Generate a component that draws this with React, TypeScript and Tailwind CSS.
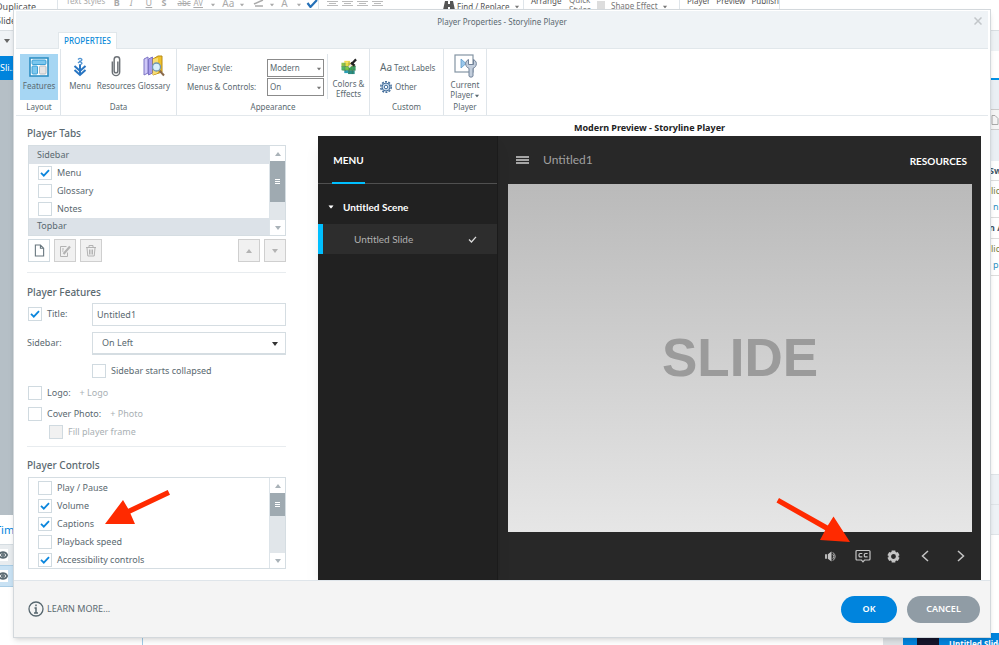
import React, { useState } from 'react';
import { Eye } from 'lucide-react';

interface Option {
  id: string;
  label: string;
  checked: boolean;
}

const initialTabs: Option[] = [
  { id: 'menu', label: 'Menu', checked: true },
  { id: 'glossary', label: 'Glossary', checked: false },
  { id: 'notes', label: 'Notes', checked: false },
];

const initialControls: Option[] = [
  { id: 'play', label: 'Play / Pause', checked: false },
  { id: 'volume', label: 'Volume', checked: true },
  { id: 'captions', label: 'Captions', checked: true },
  { id: 'speed', label: 'Playback speed', checked: false },
  { id: 'accessibility', label: 'Accessibility controls', checked: true },
];

function Caret({ className = '', up = false }: { className?: string; up?: boolean }) {
  return (
    <svg viewBox="0 0 6 4" className={`w-1.5 h-1 shrink-0 ${className}`} fill="currentColor" aria-hidden="true">
      <path d={up ? 'M0 4h6L3 0z' : 'M0 0h6L3 4z'} />
    </svg>
  );
}

interface CheckboxProps {
  id: string;
  checked: boolean;
  disabled?: boolean;
  onChange: () => void;
}

function Checkbox({ id, checked, disabled, onChange }: CheckboxProps) {
  return (
    <span className="relative block w-3.5 h-3.5 shrink-0">
      <input
        id={id}
        type="checkbox"
        checked={checked}
        disabled={disabled}
        onChange={onChange}
        className="peer block appearance-none w-3.5 h-3.5 border border-[#d0dae0] bg-white disabled:bg-[#f1f1f1]"
      />
      <svg
        viewBox="0 0 14 14"
        className="absolute inset-0 hidden peer-checked:block pointer-events-none"
        fill="none"
        stroke="#0b86dd"
        strokeWidth="1.8"
        aria-hidden="true"
      >
        <path d="M3 6.8 5.8 9.6 11 4.2" />
      </svg>
    </span>
  );
}

function OptionRow({ option, onToggle }: { option: Option; onToggle: (id: string) => void }) {
  return (
    <div className="flex items-center h-[18px] pl-[9px] gap-[5px]">
      <Checkbox id={option.id} checked={option.checked} onChange={() => onToggle(option.id)} />
      <label htmlFor={option.id}>{option.label}</label>
    </div>
  );
}

function Scrollbar({ thumb }: { thumb: string }) {
  return (
    <div className="flex flex-col w-4 shrink-0 border-l border-[#dde4e9] bg-[#e1e6ea] text-[#a9b2b8]">
      <div className="flex items-center justify-center h-[15px] bg-white">
        <Caret up />
      </div>
      <div className={`flex flex-col items-center justify-center gap-px bg-[#9faab1] ${thumb}`}>
        <i className="block w-[5px] h-px bg-white" />
        <i className="block w-[5px] h-px bg-white" />
        <i className="block w-[5px] h-px bg-white" />
      </div>
      <div className="flex items-center justify-center h-[15px] bg-white mt-auto">
        <Caret />
      </div>
    </div>
  );
}

function RibbonGroup({ label, className = '', children }: { label: string; className?: string; children: React.ReactNode }) {
  return (
    <section className={`flex flex-col shrink-0 border-r border-[#dfe5ea] pt-[5px] ${className}`}>
      <div className="flex h-[47px]">{children}</div>
      <div className="text-center leading-3">{label}</div>
    </section>
  );
}

function RibbonSelect({ id, label, value }: { id: string; label: string; value: string }) {
  return (
    <div className="flex items-center h-[19px]">
      <label htmlFor={id} className="w-20">{label}</label>
      <span className="relative">
        <select
          id={id}
          defaultValue={value}
          className="block appearance-none w-[57px] h-[18px] pl-0.5 border border-[#8b8b8b] bg-white"
        >
          <option>{value}</option>
        </select>
        <Caret className="absolute right-0.5 top-2 scale-75 text-[#777] pointer-events-none" />
      </span>
    </div>
  );
}

function Ribbon() {
  return (
    <div className="flex h-[67px] mx-0.5 border-b border-[#e3e8ec] text-[8px]">
      <RibbonGroup label="Layout" className="w-[45px] pl-1 pr-0.5">
        <button className="flex flex-col items-center w-full h-[46px] pt-[3px] bg-[#a6d6f3]">
          <svg viewBox="0 0 20 20" className="w-5 h-5" aria-hidden="true">
            <rect x="1" y="1" width="18" height="18" fill="#fff" stroke="#2d8fc4" strokeWidth="1.6" />
            <rect x="3" y="3" width="14" height="4.5" rx="1" fill="#7cc7ee" stroke="#3b9fd4" />
            <rect x="3" y="9" width="5.5" height="8" rx="1" fill="#7cc7ee" stroke="#3b9fd4" />
            <rect x="10.5" y="9" width="6.5" height="8" rx="1" fill="#e5e5e5" stroke="#b9bec2" />
          </svg>
          <span className="mt-[3px] leading-3">Features</span>
        </button>
      </RibbonGroup>

      <RibbonGroup label="Data" className="w-[116px]">
        <button className="flex flex-col items-center w-[38px] pt-[3px]">
          <svg viewBox="0 0 20 20" className="w-5 h-5" fill="none" aria-hidden="true">
            <path d="M8 2.500q2-2 3.500-.5T9 4.500M8 6q2-2 3.500-.5T9 8" stroke="#4f93d2" strokeWidth="1.300" />
            <path d="M4.500 9 10 14l5.500-5M4.500 13 10 18l5.500-5" stroke="#2875c2" strokeWidth="2" />
            <path d="M10 8v9" stroke="#2875c2" strokeWidth="2" />
          </svg>
          <span className="mt-[3px] leading-3">Menu</span>
        </button>
        <button className="flex flex-col items-center w-[34px] pt-px">
          <svg viewBox="0 0 12 24" className="w-3 h-[22px]" fill="none" stroke="#6d7277" strokeWidth="1.6" aria-hidden="true">
            <path d="M2 7v11.500a4 4 0 0 0 8 0V5a3 3 0 0 0-6 0v12.500a2 2 0 0 0 4 0V7" />
          </svg>
          <span className="mt-[3px] leading-3">Resources</span>
        </button>
        <button className="flex flex-col items-center w-[42px] pt-px">
          <svg viewBox="0 0 22 22" className="w-[22px] h-[22px]" aria-hidden="true">
            <path d="M1 4l4-2v16l-4 2z" fill="#cfc8f7" stroke="#7d74c4" />
            <path d="M5.500 4l4-2v16l-4 2z" fill="#a79cec" stroke="#7d74c4" />
            <path d="M10 4l5-3h4v16l-9 3z" fill="#f0c22d" stroke="#b88b14" />
            <path d="M10 4l5-1v15l-5 2z" fill="#f8dd72" />
            <path d="m16.500 15.500 4.500 5" stroke="#8a6a4a" strokeWidth="2" />
            <circle cx="13.500" cy="12" r="4" fill="#d9f0fb" stroke="#6f97b0" strokeWidth="1.300" />
          </svg>
          <span className="mt-[3px] leading-3">Glossary</span>
        </button>
      </RibbonGroup>

      <RibbonGroup label="Appearance" className="w-[193px]">
        <div className="flex flex-col pl-2.5 w-[150px] pt-1">
          <RibbonSelect id="player-style" label="Player Style:" value="Modern" />
          <RibbonSelect id="menus-controls" label="Menus & Controls:" value="On" />
        </div>
        <button className="flex flex-col items-center grow pt-1 mb-0.5 border-l border-[#dfe5ea]">
          <svg viewBox="0 0 18 18" className="w-[18px] h-[18px]" aria-hidden="true">
            <path d="M4 3h6v2H4z" fill="#f5d94c" />
            <path d="M1 5h4v4H1z" fill="#8cc04a" />
            <path d="M5 5h4v4H5z" fill="#e8dc42" />
            <path d="M9 5h4v4H9z" fill="#f2c83c" />
            <path d="M1 9h4v4H1z" fill="#4eb56a" />
            <path d="M5 9h4v4H5z" fill="#7ac943" />
            <path d="M9 9h4v4H9z" fill="#3aa757" />
            <path d="M13 8h3v5h-3z" fill="#3b9a62" />
            <path d="M4 13h4v3H4z" fill="#2c9fb5" />
            <path d="M8 13h7v4H8z" fill="#2b8f88" />
            <path d="M1 9h15M5 5v9M9 4v13M12.500 8v9M2 13h14" stroke="#3f6d3c" strokeWidth=".5" />
            <path d="m9 10 5-6" stroke="#e8e8e8" strokeWidth="2" />
            <path d="m11 5 4 3M12.500 5.500 16.500 1.500" stroke="#222" strokeWidth="2.400" />
          </svg>
          <span className="mt-1 leading-[10px]">
            Colors &amp;<br />Effects
          </span>
        </button>
      </RibbonGroup>

      <RibbonGroup label="Custom" className="w-[74px]">
        <div className="flex flex-col items-start pl-2.5 pt-1">
          <button className="flex items-center h-[19px] gap-0.5 whitespace-nowrap">
            <span className="text-[10px]">Aa</span>Text Labels
          </button>
          <button className="flex items-center h-[19px] gap-[3px]">
            <svg viewBox="0 0 24 24" className="w-3 h-3" fill="none" stroke="#456f9c" aria-hidden="true">
              <circle cx="12" cy="12" r="10.500" strokeWidth="3" strokeDasharray="4 2.600" />
              <circle cx="12" cy="12" r="8" fill="#c9dcef" strokeWidth="2" />
              <circle cx="12" cy="12" r="3.500" fill="#fff" strokeWidth="2" />
            </svg>
            Other
          </button>
        </div>
      </RibbonGroup>

      <RibbonGroup label="Player" className="w-[43px]">
        <button className="flex flex-col items-center w-full">
          <svg viewBox="0 0 23 24" className="w-[23px] h-6" aria-hidden="true">
            <rect x="1" y="1" width="18" height="17" fill="#fff" stroke="#8494a3" strokeWidth="1.200" />
            <path d="M7 5l5 4.500L7 14z" fill="#9bc7ea" stroke="#5b9bcb" strokeWidth=".8" />
            <path
              d="M14.500 5.500v5h5v-5c2.500 1.300 3.500 3.500 2.500 6-.6 1.600-1.700 2.300-3 2.800V22c0 1.500-4 1.500-4 0v-7.700c-1.300-.5-2.400-1.200-3-2.800-1-2.500 0-4.700 2.500-6z"
              fill="#c3cedc"
              stroke="#718299"
            />
          </svg>
          <span className="mt-0.5 leading-[10px]">
            Current<br />Player<Caret className="inline-block scale-75" />
          </span>
        </button>
      </RibbonGroup>
    </div>
  );
}

function IconButton({ label, disabled, children }: { label: string; disabled?: boolean; children: React.ReactNode }) {
  return (
    <button
      aria-label={label}
      disabled={disabled}
      className="flex items-center justify-center w-[22px] h-[23px] border border-[#d0dae0] bg-white text-[#68777f] disabled:bg-[#f1f1f1] disabled:border-[#cfcfcf] disabled:text-[#b3b3b3]"
    >
      {children}
    </button>
  );
}

function SettingsColumn() {
  const [tabs, setTabs] = useState(initialTabs);
  const [controls, setControls] = useState(initialControls);
  const [title, setTitle] = useState('Untitled1');
  const [features, setFeatures] = useState({ title: true, collapsed: false, logo: false, cover: false });

  const toggle = (list: Option[], id: string) =>
    list.map(item => (item.id === id ? { ...item, checked: !item.checked } : item));

  const toggleFeature = (key: keyof typeof features) => {
    setFeatures({ ...features, [key]: !features[key] });
  };

  return (
    <div className="w-[259px] shrink-0 pt-[9px]">
      <h2 className="text-[10px] leading-4 font-medium">Player Tabs</h2>
      <div className="flex h-[91px] mt-1 ml-px border border-[#d5dde2] overflow-hidden">
        <div className="grow">
          <div className="h-[18px] pl-2 leading-[18px] bg-[#dce2e8]">Sidebar</div>
          {tabs.map(option => (
            <OptionRow key={option.id} option={option} onToggle={id => setTabs(toggle(tabs, id))} />
          ))}
          <div className="h-[17px] pl-2 leading-4 bg-[#dce2e8]">Topbar</div>
        </div>
        <Scrollbar thumb="h-[41px]" />
      </div>

      <div className="flex gap-1 mt-[3px] ml-px">
        <IconButton label="New tab">
          <svg viewBox="0 0 12 14" className="w-[11px] h-[13px]" fill="none" stroke="currentColor" strokeWidth="1.200" aria-hidden="true">
            <path d="M1.500 1h5.500l3.500 3.500V13h-9zM7 1v3.500h3.500" />
          </svg>
        </IconButton>
        <IconButton label="Edit tab" disabled>
          <svg viewBox="0 0 12 12" className="w-3 h-3" fill="none" stroke="currentColor" aria-hidden="true">
            <path d="M8.500 7.500v4h-7v-10h6M3 4h2M3 6h1.500" />
            <path d="M4.500 9 11 1.500" strokeWidth="2.200" />
          </svg>
        </IconButton>
        <IconButton label="Delete tab" disabled>
          <svg viewBox="0 0 12 13" className="w-3 h-[13px]" fill="none" stroke="currentColor" aria-hidden="true">
            <path d="M1 3.500h10M4 3V1.500h4V3M2 4l.8 8h6.400L10 4M4.500 5.500v5M6 5.500v5M7.500 5.500v5" />
          </svg>
        </IconButton>
        <div className="grow" />
        <IconButton label="Move up" disabled>
          <Caret up />
        </IconButton>
        <IconButton label="Move down" disabled>
          <Caret />
        </IconButton>
      </div>

      <hr className="mt-[10px] border-[#e8ecef]" />

      <h2 className="text-[10px] leading-4 font-medium mt-[11px]">Player Features</h2>
      <div className="flex items-center h-6 mt-0.5 pl-px gap-[5px]">
        <Checkbox id="use-title" checked={features.title} onChange={() => toggleFeature('title')} />
        <label htmlFor="use-title" className="w-[39px]">Title:</label>
        <input
          aria-label="Player title"
          value={title}
          onChange={e => setTitle(e.target.value)}
          className="grow min-w-0 ml-px h-[23px] px-1 border border-[#d5dde2] bg-white"
        />
      </div>
      <div className="flex items-center h-6 mt-[5px]">
        <label htmlFor="sidebar-position" className="w-[65px]">Sidebar:</label>
        <span className="relative grow">
          <select
            id="sidebar-position"
            defaultValue="On Left"
            className="block appearance-none w-full h-[23px] px-[9px] border border-[#d5dde2] border-b-2 bg-white"
          >
            <option>On Left</option>
            <option>On Right</option>
          </select>
          <Caret className="absolute right-2 top-2.5 text-[#333] pointer-events-none" />
        </span>
      </div>
      <div className="flex items-center h-4 mt-2 pl-[65px] gap-[5px]">
        <Checkbox id="collapsed" checked={features.collapsed} onChange={() => toggleFeature('collapsed')} />
        <label htmlFor="collapsed">Sidebar starts collapsed</label>
      </div>
      <div className="flex items-center h-4 mt-1.5 pl-px gap-[5px]">
        <Checkbox id="logo" checked={features.logo} onChange={() => toggleFeature('logo')} />
        <label htmlFor="logo">Logo:</label>
        <button className="ml-1 text-[#a9b0b4]">+ Logo</button>
      </div>
      <div className="flex items-center h-4 mt-[5px] pl-px gap-[5px]">
        <Checkbox id="cover" checked={features.cover} onChange={() => toggleFeature('cover')} />
        <label htmlFor="cover">Cover Photo:</label>
        <button className="ml-1 text-[#a9b0b4]">+ Photo</button>
      </div>
      <div className="flex items-center h-4 mt-0.5 pl-[22px] gap-[5px] text-[#a9b0b4]">
        <Checkbox id="fill-frame" checked={false} disabled onChange={() => {}} />
        <label htmlFor="fill-frame">Fill player frame</label>
      </div>

      <hr className="mt-1.5 border-[#e8ecef]" />

      <h2 className="text-[10px] leading-4 font-medium mt-2.5">Player Controls</h2>
      <div className="relative mt-1 ml-px">
        <div className="flex h-[92px] border border-[#d5dde2] overflow-hidden">
          <div className="grow pt-px">
            {controls.map(option => (
              <OptionRow key={option.id} option={option} onToggle={id => setControls(toggle(controls, id))} />
            ))}
          </div>
          <Scrollbar thumb="h-[23px]" />
        </div>
        {/* Arrow pointing at Captions */}
        <svg viewBox="0 0 66 38" className="absolute left-[77px] top-3 w-[66px] h-[38px] pointer-events-none" fill="#ff2a00" aria-hidden="true">
          <path d="M0 35 18 11l5.200 8.800L62.700 1 65 5.700 25.400 24.500 30 35z" />
        </svg>
      </div>
    </div>
  );
}

function Preview() {
  return (
    <div className="flex flex-col grow min-w-0 pt-1.5">
      <h2 className="h-[14px] leading-3 text-center font-bold text-[#222]">Modern Preview - Storyline Player</h2>
      <div className="flex grow bg-[#282828] font-[Lato,sans-serif] text-[10px]">
        <nav className="w-[180px] shrink-0 bg-[#212121] border-r border-[#1b1b1b] shadow-lg">
          <div className="flex h-12 pl-3.5 border-b border-[#505050]">
            <button className="w-[33px] pt-0.5 -mb-px border-b-2 border-[#00bfff] text-white font-bold">MENU</button>
          </div>
          <div className="flex items-center h-10 pt-1.5 pl-2.5 gap-[9px] text-white font-bold">
            <Caret className="scale-90" />
            <span>Untitled Scene</span>
          </div>
          <div className="flex items-center h-[30px] border-l-[5px] border-[#00bfff] pl-[31px] pr-5 bg-[#2d2d2d] text-[#b0b0b0]">
            <span className="grow">Untitled Slide</span>
            <svg viewBox="0 0 10 8" className="w-[9px] h-[7px]" fill="none" stroke="#ddd" strokeWidth="1.500" aria-hidden="true">
              <path d="m1 4 2.800 2.800L9 1" />
            </svg>
          </div>
        </nav>

        <div className="relative flex flex-col grow min-w-0">
          <div className="flex items-center h-12 pl-[18px] pr-3.5">
            <button aria-label="Toggle sidebar" className="flex flex-col gap-px w-[13px]">
              <i className="block w-full h-0.5 bg-[#a5a5a5]" />
              <i className="block w-full h-0.5 bg-[#a5a5a5]" />
              <i className="block w-full h-0.5 bg-[#a5a5a5]" />
            </button>
            <span className="grow ml-3.5 text-xs text-[#a0a0a0]">Untitled1</span>
            <button className="pt-0.5 text-white font-bold">RESOURCES</button>
          </div>
          <div className="flex grow items-center justify-center ml-2.5 mr-[9px] bg-linear-to-b from-[#bababa] to-[#e6e6e6] text-[#9b9b9b] text-[53px] font-bold font-['Liberation_Sans',Arial,sans-serif]">
            SLIDE
          </div>
          <div className="flex items-center justify-end h-12 pr-1 text-[#c4c4c4]">
            <button aria-label="Volume" className="flex justify-center w-[31px]">
              <svg viewBox="0 0 14 12" className="w-[13px] h-[11px]" fill="currentColor" aria-hidden="true">
                <path d="M0 3.500h2v5H0zM3 3.500 7 .5v11L3 8.500z" />
                <path d="M8.500 3.500q2 2.500 0 5M8.500 1.500q5 4.500 0 9" fill="none" stroke="currentColor" />
              </svg>
            </button>
            <button aria-label="Captions" className="flex justify-center w-[31px]">
              <svg viewBox="0 0 16 14" className="w-4 h-3.5" fill="none" stroke="currentColor" strokeWidth="1.200" aria-hidden="true">
                <path d="M2 1.500h12a1 1 0 0 1 1 1v7.500a1 1 0 0 1-1 1H9.500L8 12.800 6.500 11H2a1 1 0 0 1-1-1V2.500a1 1 0 0 1 1-1z" />
                <path d="M7.300 4.500H5.200a1.200 1.200 0 0 0-1.200 1.200v1a1.200 1.200 0 0 0 1.200 1.200h2.100M12.600 4.500h-2.100a1.200 1.200 0 0 0-1.200 1.200v1a1.200 1.200 0 0 0 1.200 1.200h2.100" />
              </svg>
            </button>
            <button aria-label="Settings" className="flex justify-center w-[31px]">
              <svg viewBox="0 0 14 14" className="w-[13px] h-[13px]" fill="none" stroke="currentColor" aria-hidden="true">
                <circle cx="7" cy="7" r="4" strokeWidth="2.800" />
                <path d="M7 .6v2M7 11.400v2M1.400 3.800l1.800 1M10.800 9.200l1.800 1M1.400 10.200l1.800-1M10.800 4.800l1.800-1" strokeWidth="4" />
              </svg>
            </button>
            <button aria-label="Previous" className="flex justify-center w-8">
              <svg viewBox="0 0 8 12" className="w-2 h-3" fill="none" stroke="currentColor" strokeWidth="1.500" aria-hidden="true">
                <path d="M7 1 1.500 6 7 11" />
              </svg>
            </button>
            <button aria-label="Next" className="flex justify-center w-8 ml-1">
              <svg viewBox="0 0 8 12" className="w-2 h-3" fill="none" stroke="currentColor" strokeWidth="1.500" aria-hidden="true">
                <path d="m1 1 5.500 5L1 11" />
              </svg>
            </button>
          </div>
          {/* Arrow pointing at the CC button */}
          <svg viewBox="0 0 74 46" className="absolute right-[131px] bottom-[37px] w-[74px] h-[46px] pointer-events-none" fill="#ff2a00" aria-hidden="true">
            <path d="M3 1 51.800 28.600 57.500 19.500 74 45 44 43l5.200-9.800L.5 5.500z" />
          </svg>
        </div>
      </div>
    </div>
  );
}

function EditorRibbon() {
  return (
    <div className="flex h-[31px] bg-white border-b border-[#d9dee2] whitespace-nowrap text-[#777] leading-3 overflow-hidden">
      <div className="w-[58px] shrink-0 border-r border-[#dfe5ea] pt-px">
        <div className="-ml-1 text-[#555]">Duplicate</div>
        <div className="-ml-1 mt-0.5 text-[#555]">Slide</div>
      </div>
      <div className="flex items-start w-[261px] shrink-0 border-r border-[#dfe5ea] pl-2 -mt-[5px] text-[#aaa]">
        <span className="w-12 text-[8px]">Text Styles</span>
        <b className="w-4 mt-0.5">B</b>
        <i className="w-4 mt-0.5">I</i>
        <u className="w-4 mt-0.5">U</u>
        <b className="w-4 mt-0.5">S</b>
        <s className="w-4 mt-0.5 text-[8px]">abc</s>
        <span className="w-[17px] mt-0.5 text-[8px] underline">AV</span>
        <Caret className="mt-2 mr-1.5 scale-75" />
        <span className="w-[17px] mt-0.5 text-[10px]">Aa</span>
        <Caret className="mt-2 mr-2 scale-75" />
        <svg viewBox="0 0 12 8" className="w-3 h-2 mt-1 mr-1" fill="none" stroke="currentColor" aria-hidden="true">
          <path d="M1 5 10 1M2 7h8" strokeWidth="1.500" />
        </svg>
        <Caret className="mt-2 mr-1.5 scale-75" />
        <span className="w-[15px] mt-0.5 text-[10px]">A</span>
        <Caret className="mt-2 mr-1 scale-75" />
        <svg viewBox="0 0 12 12" className="w-3 h-3 mt-px" fill="none" stroke="#2470b8" strokeWidth="2.200" aria-hidden="true">
          <path d="m1.500 7 3 4L11 4" />
        </svg>
      </div>
      <div className="flex w-[205px] shrink-0 border-r border-[#dfe5ea] pl-2 pt-px">
        <div className="flex gap-1 w-[116px] text-[#bbb]">
          {[0, 1, 2, 3].map(i => (
            <svg key={i} viewBox="0 0 11 6" className="w-[11px] h-1.5" stroke="currentColor" aria-hidden="true">
              <path d="M0 .5h11M2 2.500h7M0 4.500h11" />
            </svg>
          ))}
        </div>
        <svg viewBox="0 0 12 10" className="w-3 h-2.5 mr-0.5" fill="#555" aria-hidden="true">
          <path d="M2 0h3v3h2V0h3l2 9H7V6H5v3H0z" />
        </svg>
        <span className="text-[8px] text-[#555]">Find / Replace</span>
        <Caret className="mt-1 ml-1 scale-75" />
      </div>
      <div className="flex w-[156px] shrink-0 border-r border-[#dfe5ea] pl-[7px] -mt-[5px] text-[8px]">
        <span className="w-[38px] text-[#555]">Arrange</span>
        <span className="w-7 leading-[10px]">Quick<br />Styles</span>
        <span className="w-2 h-2 mt-1.5 bg-[#ddd] mr-1.5" />
        <span className="pt-[5px]">Shape Effect</span>
        <Caret className="mt-2.5 ml-1 scale-75" />
      </div>
      <div className="flex gap-1.5 w-[100px] shrink-0 border-r border-[#dfe5ea] pl-[7px] -mt-[5px] text-[8px] text-[#555]">
        <span>Player</span>
        <span>Preview</span>
        <span>Publish</span>
      </div>
    </div>
  );
}

function EditorBackdrop() {
  return (
    <div className="flex flex-col h-full" aria-hidden="true">
      <EditorRibbon />
      <div className="flex grow min-h-0 justify-between">
        <div className="flex flex-col w-[13px] shrink-0 overflow-hidden whitespace-nowrap">
          <div className="h-[25px] shrink-0 pt-2 pl-1 bg-[#f0f3f6] text-[#666]">
            <Caret />
          </div>
          <div className="h-6 shrink-0 leading-6 bg-[#0084dd] text-white">Sli...</div>
          <div className="grow bg-[#b5bfc6]" />
          <div className="h-[29px] shrink-0 leading-[29px] -ml-[5px] text-[11px] text-[#0084dd]">Tim</div>
          <div className="flex items-center h-[21px] shrink-0 bg-[#e8ecef] border-t border-[#d5dde2]">
            <Eye className="w-2.5 h-3 shrink-0 -ml-0.5 bg-white text-[#5b6b73]" strokeWidth={4} />
          </div>
          <div className="flex items-center h-[22px] shrink-0 bg-[#c9e2f4] border-y border-[#a9cde6]">
            <Eye className="w-2.5 h-3 shrink-0 -ml-0.5 bg-white text-[#5b6b73]" strokeWidth={4} />
          </div>
          <div className="h-[46px] shrink-0 bg-white" />
        </div>
        <div className="flex flex-col w-2 shrink-0 overflow-hidden whitespace-nowrap leading-4">
          <div className="h-5 shrink-0 bg-[#eef2f5]" />
          <div className="h-[29px] shrink-0 border-b-2 border-[#0091e6]" />
          <div className="h-[29px] shrink-0 bg-[#eaeff4]" />
          <div className="flex items-center h-[21px] shrink-0 bg-[#f5f5f5] border-y border-[#ccc]">
            <svg viewBox="0 0 8 10" className="w-2 h-2.5" fill="none" stroke="#aaa">
              <path d="M1 .5h3l3 3v6H1z" />
            </svg>
          </div>
          <div className="h-[31px] shrink-0 bg-[#eaeff4]" />
          <div className="h-5 shrink-0 pt-0.5 -ml-0.5 border-b border-[#ddd] font-bold text-[#456]">Sw</div>
          <div className="h-[37px] shrink-0 pt-0.5 border-b border-[#ddd] text-[#7a8040]">
            lic
            <div className="pl-0.5 text-[#2f8fbf]">n</div>
          </div>
          <div className="h-[21px] shrink-0 pt-0.5 -ml-0.5 border-b border-[#ddd] font-bold text-[#456]">n A</div>
          <div className="h-[37px] shrink-0 pt-0.5 border-b border-[#ddd] text-[#7a8040]">
            lic
            <div className="pl-0.5 text-[#2f8fbf]">p</div>
          </div>
          <div className="grow" />
          <div className="h-[31px] shrink-0 bg-[#eef2f6] border-y border-[#dfe4e8]" />
          <div className="h-[30px] shrink-0 bg-[#eef2f6] border-b border-[#dfe4e8]" />
          <div className="h-[98px] shrink-0" />
        </div>
      </div>
      <div className="flex h-3 shrink-0">
        <div className="w-[143px] border-r border-[#9fcbe8]" />
        <div className="grow" />
        <div className="w-5 bg-[#dfe3e6]" />
        <div className="flex w-24 pl-3.5 bg-[#0084dd] text-white font-bold text-[8px] leading-[22px] overflow-hidden whitespace-nowrap">
          <div className="w-[22px] shrink-0 mt-1 mr-2.5 bg-[#15152b]" />
          Untitled Slide
        </div>
      </div>
    </div>
  );
}

export default function App() {
  return (
    <div className="relative h-screen min-h-[640px] overflow-hidden bg-white font-['Noto_Sans',sans-serif] text-[9px] text-[#5a6970]">
      <EditorBackdrop />

      <div
        role="dialog"
        aria-labelledby="dialog-title"
        className="absolute left-[13px] right-2 top-[9px] bottom-[7px] flex flex-col bg-white border border-[#d3d8dc] shadow-md"
      >
        <header className="mx-0.5 mt-px h-[38px] flex flex-col bg-[#eff3f6] border-b border-[#e1e7eb]">
          <div className="relative h-[21px] leading-[21px]">
            <h1 id="dialog-title" className="text-center text-[8px]">Player Properties - Storyline Player</h1>
            <button aria-label="Close" className="absolute right-1.5 top-1.5">
              <svg viewBox="0 0 8 8" className="w-2 h-2" fill="none" stroke="#c2c6c9" strokeWidth="1.500" aria-hidden="true">
                <path d="m.5.5 7 7M7.500.5l-7 7" />
              </svg>
            </button>
          </div>
          <div className="flex grow pl-[42px]">
            <button className="h-[17px] w-[59px] bg-white border border-b-0 border-[#e1e7eb] text-[8px] font-medium text-[#0b8ad9]">
              PROPERTIES
            </button>
          </div>
        </header>

        <Ribbon />

        <div className="flex grow min-h-0 gap-8 pl-[13px] pr-[9px]">
          <SettingsColumn />
          <Preview />
        </div>

        <footer className="flex items-center h-[57px] shrink-0 pl-3.5 pr-2.5 gap-2.5 border-t border-[#dfe5ea] bg-[#f4f4f4]">
          <a href="#learn-more" className="flex items-center gap-[3px] grow">
            <svg viewBox="0 0 16 16" className="w-4 h-4" fill="none" stroke="#56666e" aria-hidden="true">
              <circle cx="8" cy="8" r="7" strokeWidth="1.300" />
              <path d="M8 3.500v1.800M6.500 7H8v5M6 12h4" strokeWidth="1.500" />
            </svg>
            LEARN MORE...
          </a>
          <button className="w-14 h-[27px] rounded-full bg-[#0084dd] text-white font-semibold">OK</button>
          <button className="w-[73px] h-[27px] rounded-full bg-[#909ca5] text-white font-semibold">CANCEL</button>
        </footer>
      </div>
    </div>
  );
}
